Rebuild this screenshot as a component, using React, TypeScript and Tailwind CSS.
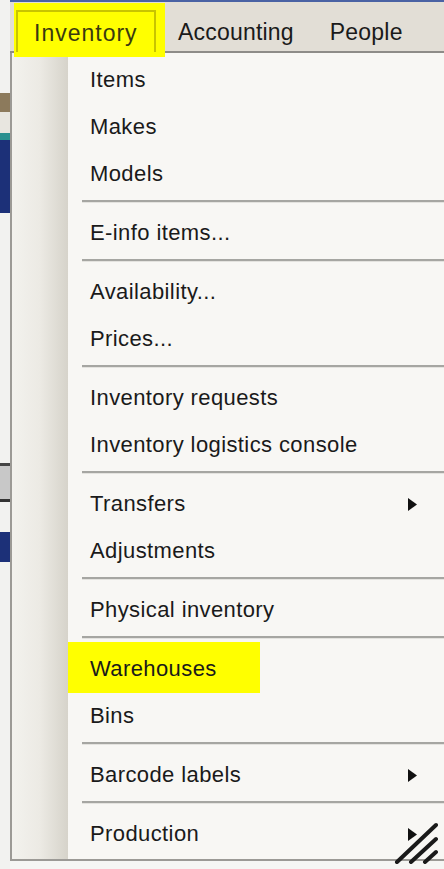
const menu: (string | null)[] = [
  "Items",
  "Makes",
  "Models",
  null,
  "E-info items...",
  null,
  "Availability...",
  "Prices...",
  null,
  "Inventory requests",
  "Inventory logistics console",
  null,
  "Transfers",
  "Adjustments",
  null,
  "Physical inventory",
  null,
  "Warehouses",
  "Bins",
  null,
  "Barcode labels",
  null,
  "Production",
];

const submenus = ["Transfers", "Barcode labels", "Production"];

function Arrow() {
  return (
    <svg width="11" height="15" viewBox="0 0 11 15" className="mr-[26px] mt-[2px]">
      <polygon points="1,1 10,7.5 1,14" fill="#111" />
    </svg>
  );
}

function Separator() {
  return (
    <div className="flex h-[12px] flex-col justify-center pl-[14px]">
      <div className="h-[2px] bg-[#a6a6a2]" />
      <div className="h-px bg-[#e4e3df]" />
    </div>
  );
}

function MenuItem({ label }: { label: string }) {
  const marked = label === "Warehouses";
  return (
    <div className="flex h-[47px] items-center justify-between pt-[4px]">
      {marked ? (
        <span className="relative z-10 -mb-[2px] -mt-[4px] flex h-[51px] w-[192px] items-center bg-[#ffff00] pl-[22px] pt-[2px]">
          {label}
        </span>
      ) : (
        <span className="pl-[22px]">{label}</span>
      )}
      {submenus.includes(label) && <Arrow />}
    </div>
  );
}

export default function App() {
  return (
    <div
      className="flex h-[869px] w-[444px] overflow-hidden bg-[#f6f6f4] text-[22px] leading-none tracking-[0.4px] text-[#1a1a1a]"
      style={{ fontFamily: '"Liberation Sans", Arial, sans-serif' }}
    >
      {/* edge of the window behind the menu */}
      <div className="flex w-[10px] flex-col bg-[#f2f2f0]">
        <div className="h-[93px]" />
        <div className="h-[19px] bg-[#8c7a5c]" />
        <div className="h-[21px] bg-[#e8e6e0]" />
        <div className="h-[7px] bg-[#2a9090]" />
        <div className="h-[73px] bg-[#1c3078]" />
        <div className="h-[250px]" />
        <div className="h-[3px] bg-[#444]" />
        <div className="h-[33px] bg-[#c8c8c8]" />
        <div className="h-[3px] bg-[#333]" />
        <div className="h-[30px]" />
        <div className="h-[30px] bg-[#1c3078]" />
      </div>

      <div className="relative flex flex-1 flex-col">
        <div className="h-[2px] bg-[#4a62a4]" />
        <div className="flex h-[51px] items-start border-b-2 border-[#8e8c88] bg-[#e2ded6] text-[23px] tracking-[0.2px]">
          <div className="relative z-20 ml-[4px] mt-px flex h-[54px] w-[151px] bg-[#ffff00] pl-[2px] pt-[7px]">
            <div className="flex h-[42px] w-[140px] items-center border-l-2 border-r-2 border-t-2 border-[#c8c400] pl-[16px] pt-[2px] tracking-[1px] text-[#3a3a10]">
              Inventory
            </div>
          </div>
          <div className="flex h-[49px] items-center pl-[13px] pt-[11px]">Accounting</div>
          <div className="flex h-[49px] items-center pl-[36px] pt-[11px]">People</div>
        </div>

        <div className="flex flex-1 flex-col">
          <div className="flex h-[808px] border-b-2 border-l-2 border-[#9c9a96]">
            <div className="w-[56px] bg-gradient-to-r from-[#f3f2ee] via-[#eceae4] to-[#d6d3ca]" />
            <div className="flex flex-1 flex-col bg-[#f8f7f4] pt-[1px]">
              {menu.map((label, i) =>
                label === null ? <Separator key={i} /> : <MenuItem key={i} label={label} />
              )}
            </div>
          </div>
        </div>

        {/* resize grip */}
        <svg
          className="absolute bottom-[5px] right-[6px]"
          width="44"
          height="44"
          viewBox="0 0 44 44"
        >
          <g stroke="#1a1a1a" strokeWidth="4" strokeLinecap="round">
            <line x1="3" y1="42" x2="42" y2="5" />
            <line x1="17" y1="42" x2="42" y2="19" />
            <line x1="31" y1="42" x2="42" y2="32" />
          </g>
        </svg>
      </div>
    </div>
  );
}
